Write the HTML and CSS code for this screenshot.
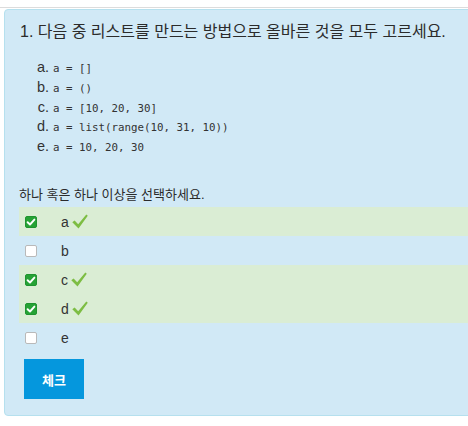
FILE: index.html
```html
<!DOCTYPE html>
<html lang="ko">
<head>
<meta charset="utf-8">
<link rel="stylesheet" href="styles.css">
</head>
<body>
<div class="topline"></div>
<div class="frame">
  <div class="card">
    <p class="title">1. 다음 중 리스트를 만드는 방법으로 올바른 것을 모두 고르세요.</p>
    <ol class="options">
      <li><code>a = []</code></li>
      <li><code>a = ()</code></li>
      <li><code>a = [10, 20, 30]</code></li>
      <li><code>a = list(range(10, 31, 10))</code></li>
      <li><code>a = 10, 20, 30</code></li>
    </ol>
    <p class="prompt">하나 혹은 하나 이상을 선택하세요.</p>
    <div class="answers">
      <div class="row correct">
        <span class="box checked"><svg viewBox="0 0 12 12" width="12" height="12"><path d="M2.6 6.2 L5 8.5 L9.4 3.6" fill="none" stroke="#fff" stroke-width="1.9" stroke-linecap="round" stroke-linejoin="round"/></svg></span>
        <span class="label">a</span>
        <svg class="tick" viewBox="0 0 16 15" width="16" height="15"><path d="M0.3 8.2 L2.6 6.4 L6.2 10.2 L14.3 0.6 L15.8 1.8 L6.5 14.4 Z" fill="#7dbd43"/></svg>
      </div>
      <div class="row">
        <span class="box"></span>
        <span class="label">b</span>
      </div>
      <div class="row correct">
        <span class="box checked"><svg viewBox="0 0 12 12" width="12" height="12"><path d="M2.6 6.2 L5 8.5 L9.4 3.6" fill="none" stroke="#fff" stroke-width="1.9" stroke-linecap="round" stroke-linejoin="round"/></svg></span>
        <span class="label">c</span>
        <svg class="tick" viewBox="0 0 16 15" width="16" height="15"><path d="M0.3 8.2 L2.6 6.4 L6.2 10.2 L14.3 0.6 L15.8 1.8 L6.5 14.4 Z" fill="#7dbd43"/></svg>
      </div>
      <div class="row correct">
        <span class="box checked"><svg viewBox="0 0 12 12" width="12" height="12"><path d="M2.6 6.2 L5 8.5 L9.4 3.6" fill="none" stroke="#fff" stroke-width="1.9" stroke-linecap="round" stroke-linejoin="round"/></svg></span>
        <span class="label">d</span>
        <svg class="tick" viewBox="0 0 16 15" width="16" height="15"><path d="M0.3 8.2 L2.6 6.4 L6.2 10.2 L14.3 0.6 L15.8 1.8 L6.5 14.4 Z" fill="#7dbd43"/></svg>
      </div>
      <div class="row">
        <span class="box"></span>
        <span class="label">e</span>
      </div>
    </div>
    <button class="check">체크</button>
  </div>
</div>
</body>
</html>
```
FILE: styles.css
```css
html, body {
  margin: 0;
  padding: 0;
  background: #fff;
  overflow: hidden;
}
body {
  font-family: "Liberation Sans", "Noto Sans CJK KR", sans-serif;
  color: #333;
}
.topline {
  height: 7px;
  border-bottom: 1px solid #dcdcdc;
}
.frame {
  overflow: hidden;
  padding: 1px 0 0 4px;
}
.card {
  width: 500px;
  background: #d1e9f6;
  border: 1px solid #b5e0ee;
  border-radius: 4px;
  padding: 11px 0 16px 14px;
}
.title {
  margin: 0;
  font-size: 16px;
  line-height: 22px;
  color: #2b2b2b;
  padding-left: 1px;
}
.options {
  margin: 14px 0 0 0;
  padding-left: 34px;
  list-style-type: lower-alpha;
  font-size: 14.5px;
}
.options li {
  height: 20px;
  line-height: 20px;
}
.options li:nth-child(n+2) {
  margin-top: -0.2px;
}
.options code {
  font-family: "DejaVu Sans Mono", monospace;
  font-size: 10.8px;
  line-height: 1;
  color: #333;
}
.prompt {
  margin: 29px 0 2px 0;
  font-size: 13px;
  line-height: 20px;
  color: #2b2b2b;
}
.answers {
  display: flex;
  flex-direction: column;
}
.row {
  display: flex;
  align-items: center;
  height: 29px;
  padding-left: 6px;
}
.row.correct {
  background: #daedd4;
}
.box {
  width: 12px;
  height: 12px;
  box-sizing: border-box;
  border: 1px solid #b9b9b9;
  border-radius: 2px;
  background: #fff;
  display: flex;
}
.box.checked {
  background: #26a236;
  border-color: #1f9430;
}
.box svg {
  margin: -1px;
}
.label {
  margin-left: 24px;
  font-size: 14px;
  color: #333;
}
.tick {
  margin-left: 3px;
  margin-top: -1px;
}
.check {
  margin: 7px 0 0 5px;
  width: 60px;
  height: 40px;
  border: 0;
  border-radius: 0;
  background: #0597dd;
  color: #fff;
  font-family: "Liberation Sans", "Noto Sans CJK KR", sans-serif;
  font-size: 13px;
  font-weight: bold;
  padding: 0;
  display: block;
}
```
